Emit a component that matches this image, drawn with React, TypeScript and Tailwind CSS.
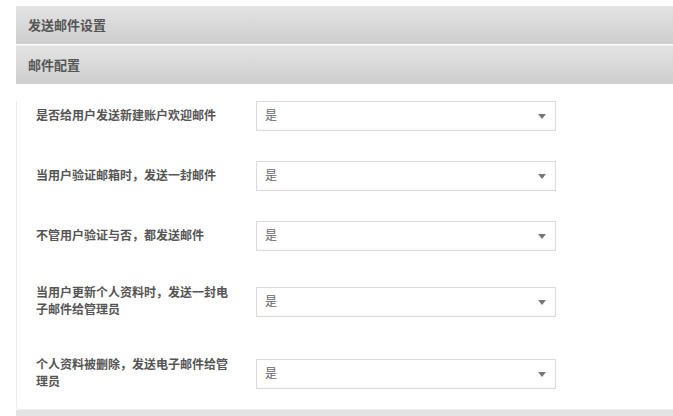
import React from "react";

const rows = [
  { label: "是否给用户发送新建账户欢迎邮件", mt: "mt-[17px]" },
  { label: "当用户验证邮箱时，发送一封邮件", mt: "mt-[30px]" },
  { label: "不管用户验证与否，都发送邮件", mt: "mt-[30px]" },
  { label: "当用户更新个人资料时，发送一封电子邮件给管理员", mt: "mt-[34px]" },
  { label: "个人资料被删除，发送电子邮件给管理员", mt: "mt-[38px]" },
];

function Header({ title }: { title: string }) {
  return (
    <div className="h-[38px] flex items-center pl-[12px] pt-[2px] bg-gradient-to-b from-[#e4e4e4] to-[#cdcdcd] text-[13px] font-bold text-[#555]">
      {title}
    </div>
  );
}

function SelectBox() {
  return (
    <div className="w-[300px] h-[30px] border border-[#dcdcdc] bg-white shadow-[inset_0_-1px_2px_rgba(0,0,0,0.04)] flex items-center justify-between pl-[8px] pr-[9px] text-[12px] text-[#666]">
      <span>是</span>
      <svg width="8" height="5" viewBox="0 0 8 5">
        <path d="M0 0 L8 0 L4 5 Z" fill="#777" />
      </svg>
    </div>
  );
}

export default function App() {
  return (
    <div
      className="w-[673px] h-[416px] overflow-hidden bg-white pt-[6px] pl-[16px]"
      style={{ fontFamily: '"Liberation Sans", "Noto Sans CJK SC", sans-serif' }}
    >
      <Header title="发送邮件设置" />
      <div className="h-px bg-white" />
      <div className="h-[1px] bg-[#f0f0f0]" />
      <Header title="邮件配置" />
      <div className="border-l border-b border-[#ececec] rounded-bl-[4px] pb-[18px]">
        {rows.map((r) => (
          <div key={r.label} className={`flex items-center ${r.mt}`}>
            <div className="w-[239px] pl-[19px] pr-[22px] text-[12px] font-bold leading-[17px] text-[#555]">
              {r.label}
            </div>
            <SelectBox />
          </div>
        ))}
      </div>
      <div className="h-[20px] bg-[#e3e3e3]" />
    </div>
  );
}
